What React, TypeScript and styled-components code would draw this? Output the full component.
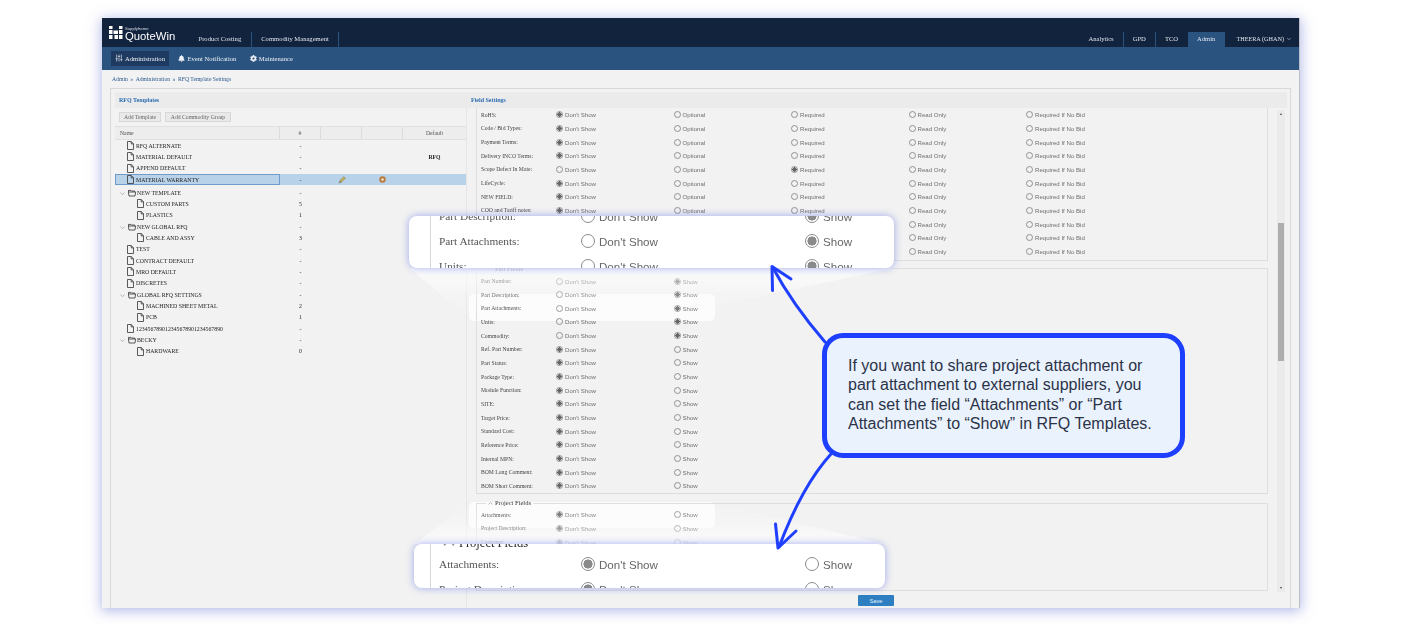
import React from 'react'
import styled, { createGlobalStyle } from 'styled-components'
import { FaBell, FaCog } from 'react-icons/fa'
import { SlidersVertical, ChevronDown } from 'lucide-react'

const GlobalStyle = createGlobalStyle`
  html, body { margin: 0; padding: 0; background: #fff; }
  body { font-family: "Liberation Serif", serif; }
  * { box-sizing: border-box; }
`

const Page = styled.div`
  width: 1402px;
  height: 625px;
  padding: 18px 102px 17px;
  overflow: hidden;
`

const Frame = styled.div`
  position: relative;
  isolation: isolate;
  width: 1198px;
  height: 590px;
  background: #f2f2f2;
  border-right: 1px solid #bcbfca;
  box-shadow: 0 2px 12px 1px rgba(104, 118, 208, 0.5);
`

const Content = styled.div`
  position: relative;
  z-index: 1;
  height: 100%;
  display: flex;
  flex-direction: column;
  filter: blur(0.35px);
`

const TopBar = styled.header`
  height: 29px;
  flex: none;
  display: flex;
  align-items: flex-end;
  background: #12233d;
  padding-left: 7px;
`

const Logo = styled.div`
  align-self: flex-start;
  display: flex;
  gap: 1px;
  width: 80px;
  padding-top: 8px;
  color: #fff;
  font-family: "Liberation Sans", sans-serif;
`

const LogoWords = styled.div`
  display: flex;
  flex-direction: column;
  small { font-size: 4.2px; line-height: 5px; color: #d8dee8; }
  strong { font-size: 11.3px; line-height: 11px; font-weight: 400; }
`

const TabGroup = styled.nav<{ $right?: boolean }>`
  display: flex;
  align-items: flex-end;
  height: 15px;
  margin-left: ${(p) => (p.$right ? 'auto' : '0')};
`

const Tab = styled.a<{ $active?: boolean; $plain?: boolean }>`
  height: 15px;
  padding: 0 9px 2px;
  display: flex;
  align-items: center;
  gap: 2px;
  font-size: 6.6px;
  color: #dfe5ee;
  background: ${(p) => (p.$active ? '#2b5380' : 'transparent')};
  border-right: 1px solid ${(p) => (p.$active || p.$plain ? 'transparent' : '#2b5380')};
`

const LeftTab = styled(Tab)`
  padding: 0 9.5px 2px;
`

const UserTab = styled(Tab)`
  padding: 0 7px 2px 11px;
  margin-right: -1px;
  font-size: 6.2px;
`

const SubBar = styled.nav`
  height: 23px;
  flex: none;
  display: flex;
  align-items: center;
  gap: 5.5px;
  background: #2b5380;
  padding-left: 9px;
`

const SubItem = styled.a<{ $active?: boolean }>`
  height: 15px;
  display: flex;
  align-items: center;
  gap: 2px;
  padding: 0 4px 1px;
  font-size: 6.6px;
  color: #eef2f7;
  background: ${(p) => (p.$active ? '#1e3a60' : 'transparent')};
  svg { flex: none; }
`

const Breadcrumb = styled.div`
  height: 18px;
  flex: none;
  padding-left: 10px;
  display: flex;
  align-items: center;
  gap: 2.5px;
  font-size: 5.7px;
  color: #2b5a8f;
`

const Panel = styled.section`
  flex: 1;
  min-height: 0;
  margin: 0 8px 0 8px;
  padding: 3px 3px 0 4px;
  border: 1px solid #d8d8d8;
  border-bottom: 0;
  display: flex;
  flex-direction: column;
`

const PanelHead = styled.div`
  height: 16px;
  flex: none;
  display: grid;
  grid-template-columns: 352px 1fr;
  align-items: center;
  padding-left: 4px;
  background: #ebebeb;
  font-size: 6px;
  font-weight: 700;
  color: #2b6cb0;
`

const PanelBody = styled.div`
  flex: 1;
  min-height: 0;
  display: grid;
  grid-template-columns: 351px 1fr;
`

const TemplateCol = styled.div`
  display: flex;
  flex-direction: column;
`

const Toolbar = styled.div`
  height: 18px;
  display: flex;
  align-items: center;
  gap: 4px;
  padding-left: 4px;
`

const ToolButton = styled.button<{ $w: number }>`
  width: ${(p) => p.$w}px;
  height: 10px;
  padding: 0;
  border: 1px solid #d8d8d8;
  background: #e9e9e9;
  color: #666;
  font: 5.7px "Liberation Serif", serif;
`

const HeadRow = styled.div`
  height: 14px;
  display: grid;
  grid-template-columns: 165px 41px 41px 41px 1fr;
  background: #ededed;
  border-top: 1px solid #e0e0e0;
  border-bottom: 1px solid #e0e0e0;
`

const HeadCell = styled.div<{ $left?: boolean }>`
  display: flex;
  align-items: center;
  justify-content: ${(p) => (p.$left ? 'flex-start' : 'center')};
  padding-left: ${(p) => (p.$left ? '5px' : '0')};
  border-right: 1px solid #dcdcdc;
  font-size: 5.7px;
  color: #555;
  &:last-child { border-right: 0; }
`

const TreeRow = styled.div<{ $selected?: boolean; $tall?: boolean }>`
  height: 11.33px;
  margin-top: ${(p) => (p.$tall ? '1.7px' : '0')};
  display: grid;
  grid-template-columns: 165px 41px 41px 41px 1fr;
  align-items: center;
  font-size: 5.8px;
  color: #1c1c1c;
  background: ${(p) => (p.$selected ? '#b8d2e9' : 'transparent')};
`

const NameCell = styled.div<{ $level: number; $selected?: boolean; $folder?: boolean }>`
  height: 100%;
  display: flex;
  align-items: center;
  gap: ${(p) => (p.$folder ? '1px' : '2px')};
  white-space: nowrap;
  padding-left: ${(p) => 12 + p.$level * 10}px;
  outline: ${(p) => (p.$selected ? '1px solid #6f9ccb' : 'none')};
  outline-offset: -1px;
`

const Twist = styled.span`
  position: relative;
  width: 0;
  height: 0;
  svg { position: absolute; left: -7px; top: -2px; }
`

const CountCell = styled.div`
  text-align: center;
`

const DefaultCell = styled.div`
  grid-column: 5;
  text-align: center;
  font-weight: 700;
  font-size: 5.7px;
`

const IconCell = styled.div`
  display: flex;
  justify-content: center;
`

const FieldCol = styled.div`
  min-height: 0;
  display: flex;
  flex-direction: column;
  border-left: 1px solid #e6e6e6;
`

const Pane = styled.div`
  height: 484px;
  flex: none;
  display: flex;
  padding-left: 9px;
  overflow: hidden;
`

const Fields = styled.div`
  width: 792px;
  flex: none;
`

const OpenGroup = styled.div`
  height: 153px;
  padding-left: 4px;
  border: 1px solid #dedede;
  border-top: 0;
`

const Group = styled.fieldset<{ $gap: number; $pad: number }>`
  margin: ${(p) => p.$gap}px 0 0;
  padding: ${(p) => p.$pad}px 0 0 4px;
  min-width: 0;
  border: 1px solid #dedede;
`

const GroupLegend = styled.legend`
  margin-left: 5px;
  padding: 0 2px;
  height: 8px;
  display: flex;
  align-items: center;
  gap: 2px;
  font-size: 6.5px;
  line-height: 8px;
  color: #333;
`

const FieldRow = styled.div<{ $cols: number }>`
  height: 13.67px;
  display: grid;
  grid-template-columns: 75px repeat(${(p) => p.$cols}, 117.5px);
  align-items: center;
`

const FieldLabel = styled.span`
  font-size: 5.67px;
  color: #444;
  white-space: nowrap;
`

const Choice = styled.label`
  display: flex;
  align-items: center;
  gap: 2px;
  font: 6.1px "Liberation Sans", sans-serif;
  color: #6f6f6f;
  white-space: nowrap;
`

const Radio = styled.span<{ $on?: boolean }>`
  width: 7px;
  height: 7px;
  flex: none;
  border-radius: 50%;
  border: 0.7px solid #8f8f8f;
  background: ${(p) =>
    p.$on ? 'radial-gradient(circle, #666 0 2px, transparent 2.3px)' : 'transparent'};
`

const Scrollbar = styled.div`
  position: relative;
  width: 8px;
  height: 482px;
  margin: 2px 0 0 9px;
  flex: none;
  background: #ebebeb;
  &::before, &::after {
    content: '';
    position: absolute;
    left: 2.5px;
    border-left: 1.5px solid transparent;
    border-right: 1.5px solid transparent;
  }
  &::before { top: 3px; border-bottom: 2px solid #444; }
  &::after { bottom: 3px; border-top: 2px solid #444; }
`

const Thumb = styled.div`
  position: absolute;
  top: 113px;
  left: 1px;
  width: 6px;
  height: 138px;
  background: #aeaeae;
`

const SaveRow = styled.div`
  flex: none;
  display: flex;
  justify-content: flex-start;
  padding: 3px 0 0 391px;
`

const SaveButton = styled.button`
  width: 36px;
  height: 11px;
  padding: 0;
  border: 0;
  border-radius: 1px;
  background: #2d7fc1;
  color: #e6f1fa;
  font: 5.7px "Liberation Sans", sans-serif;
`

const Spot = styled.div`
  position: absolute;
  z-index: 0;
  left: 367px;
  width: 246px;
  border-radius: 5px;
  background: #fcfcfc;
`

const PartSpot = styled(Spot)`
  top: 276px;
  height: 27px;
`

const ProjectSpot = styled(Spot)`
  top: 484px;
  height: 26px;
`

const Overlay = styled.svg`
  position: absolute;
  z-index: 2;
  left: 0;
  top: 0;
  width: 1198px;
  height: 590px;
  pointer-events: none;
`

const ZoomCard = styled.div`
  position: absolute;
  z-index: 2;
  overflow: hidden;
  background: #fff;
  border-radius: 8px;
  box-shadow: 0 0 7px 1px rgba(92, 108, 226, 0.45);
  &::before {
    content: '';
    position: absolute;
    top: 0;
    bottom: 0;
    width: 1px;
    background: #d8d8d8;
  }
`

const PartCard = styled(ZoomCard)`
  left: 307px;
  top: 198px;
  width: 485px;
  height: 52px;
  padding: 0 0 0 30px;
  &::before { left: 21px; }
`

const ProjectCard = styled(ZoomCard)`
  left: 312px;
  top: 526px;
  width: 471px;
  height: 44px;
  padding-left: 25px;
  &::before { left: 16px; }
`

const ZoomRows = styled.div<{ $shift: number }>`
  margin-top: ${(p) => p.$shift}px;
  filter: blur(0.25px);
`

const ZoomRow = styled.div`
  height: 25px;
  display: grid;
  grid-template-columns: 142px 224px 1fr;
  align-items: center;
`

const ZoomLabel = styled.span`
  font-size: 11.3px;
  color: #555;
  white-space: nowrap;
`

const ZoomChoice = styled.span`
  display: flex;
  align-items: center;
  gap: 4px;
  font: 11.6px "Liberation Sans", sans-serif;
  color: #666;
`

const ZoomRadio = styled.span<{ $on?: boolean }>`
  width: 14px;
  height: 14px;
  flex: none;
  border-radius: 50%;
  border: 1.2px solid #8a8a8a;
  background: ${(p) =>
    p.$on ? 'radial-gradient(circle, #8a8a8a 0 4.3px, transparent 4.8px)' : '#fff'};
`

const ZoomLegend = styled.div`
  height: 16.5px;
  margin-left: 4px;
  display: flex;
  align-items: flex-start;
  gap: 4px;
  font-size: 12.5px;
  line-height: 16px;
  color: #262626;
  svg { margin-top: 2px; }
`

const Callout = styled.aside`
  position: absolute;
  z-index: 3;
  left: 720px;
  top: 315px;
  width: 363px;
  height: 125px;
  display: flex;
  align-items: center;
  padding: 0 21px 2px;
  background: #eaf2fd;
  border: 5px solid #1f3fff;
  border-radius: 21px;
  font: 16px/19.2px "Liberation Sans", sans-serif;
  color: #2a3348;
`

const FileIcon = () => (
  <svg width="7" height="9" viewBox="0 0 7 9" fill="none" stroke="#333" strokeWidth="0.8">
    <path d="M.5.5h3.8L6.5 2.8v5.7h-6z" />
    <path d="M4.2.6v2.3h2.2" />
  </svg>
)

const FolderIcon = () => (
  <svg width="8" height="8" viewBox="0 0 8 8" fill="none" stroke="#333" strokeWidth="0.8">
    <path d="M.5 3V1.4h2.4l.6.6h3.2V3" />
    <path d="M.4 3h7.2l-.6 4H1z" />
  </svg>
)

const Chevron = ({ size = 5, color = '#9a9a9a', up = false }) => (
  <svg width={size} height={size} viewBox="0 0 6 6" fill="none" stroke={color} strokeWidth="0.8">
    <path d={up ? 'M.5 4.2L3 1.6l2.5 2.6' : 'M.5 1.8L3 4.4l2.5-2.6'} />
  </svg>
)

const PencilIcon = () => (
  <svg width="8" height="8" viewBox="0 0 8 8">
    <path d="M1 7l1-2.6L5.8.8l1.6 1.5L3.6 6z" fill="#c9b35a" stroke="#7b7047" strokeWidth="0.5" />
    <path d="M1 7l1-2.6L3.6 6z" fill="#8a8a7a" />
  </svg>
)

const DeleteIcon = () => (
  <svg width="7" height="7" viewBox="0 0 7 7">
    <circle cx="3.5" cy="3.5" r="3.2" fill="#b9793a" />
    <circle cx="3.5" cy="3.5" r="1.3" fill="#efe3d0" />
  </svg>
)

const LogoMark = () => (
  <svg width="15" height="14" viewBox="0 0 15 14" fill="#fff">
    <rect x="0" y="0" width="3.5" height="3" />
    <rect x="0" y="4" width="3.5" height="4" />
    <rect x="0" y="9" width="3.5" height="4" />
    <rect x="4.5" y="4.5" width="4.5" height="3.5" />
    <rect x="5.5" y="9" width="3.5" height="4" />
    <rect x="10" y="0" width="3.5" height="3" />
    <rect x="10" y="4" width="3.5" height="4" />
    <rect x="10" y="9" width="3.5" height="4" />
  </svg>
)

type TreeItem = {
  name: string
  count: string
  level?: number
  folder?: boolean
  selected?: boolean
  def?: string
  tall?: boolean
}

const tree: TreeItem[] = [
  { name: 'RFQ ALTERNATE', count: '-' },
  { name: 'MATERIAL DEFAULT', count: '-', def: 'RFQ' },
  { name: 'APPEND DEFAULT', count: '-' },
  { name: 'MATERIAL WARRANTY', count: '-', selected: true },
  { name: 'NEW TEMPLATE', count: '-', folder: true, tall: true },
  { name: 'CUSTOM PARTS', count: '5', level: 1 },
  { name: 'PLASTICS', count: '1', level: 1 },
  { name: 'NEW GLOBAL RFQ', count: '-', folder: true },
  { name: 'CABLE AND ASSY', count: '3', level: 1 },
  { name: 'TEST', count: '-' },
  { name: 'CONTRACT DEFAULT', count: '-' },
  { name: 'MRO DEFAULT', count: '-' },
  { name: 'DISCRETES', count: '-' },
  { name: 'GLOBAL RFQ SETTINGS', count: '-', folder: true },
  { name: 'MACHINED SHEET METAL', count: '2', level: 1 },
  { name: 'PCB', count: '1', level: 1 },
  { name: '123456789012345678901234567890', count: '-' },
  { name: 'BECKY', count: '-', folder: true },
  { name: 'HARDWARE', count: '0', level: 1 },
]

const settingCols = ["Don't Show", 'Optional', 'Required', 'Read Only', 'Required If No Bid']

const settings: [string, number][] = [
  ['RoHS:', 0],
  ['Code / Bid Types:', 0],
  ['Payment Terms:', 0],
  ['Delivery INCO Terms:', 0],
  ['Scope Defect In Mate:', 2],
  ['LifeCycle:', 0],
  ['NEW FIELD:', 0],
  ['COO and Tariff notes:', 0],
  ['', 0],
  ['', 0],
  ['', 0],
]

const partFields: [string, boolean][] = [
  ['Part Number:', true],
  ['Part Description:', true],
  ['Part Attachments:', true],
  ['Units:', true],
  ['Commodity:', true],
  ['Ref. Part Number:', false],
  ['Part Status:', false],
  ['Package Type:', false],
  ['Module Function:', false],
  ['SITE:', false],
  ['Target Price:', false],
  ['Standard Cost:', false],
  ['Reference Price:', false],
  ['Internal MPN:', false],
  ['BOM Long Comment:', false],
  ['BOM Short Comment:', false],
]

const projectFields = ['Attachments:', 'Project Description:', 'Customer:']

const ShowRow = ({ label, show }: { label: string; show: boolean }) => (
  <FieldRow $cols={2}>
    <FieldLabel>{label}</FieldLabel>
    <Choice>
      <Radio $on={!show} />
      Don't Show
    </Choice>
    <Choice>
      <Radio $on={show} />
      Show
    </Choice>
  </FieldRow>
)

const ZoomShowRow = ({ label, show }: { label: string; show: boolean }) => (
  <ZoomRow>
    <ZoomLabel>{label}</ZoomLabel>
    <ZoomChoice>
      <ZoomRadio $on={!show} />
      Don't Show
    </ZoomChoice>
    <ZoomChoice>
      <ZoomRadio $on={show} />
      Show
    </ZoomChoice>
  </ZoomRow>
)

const App = () => (
  <Page>
    <GlobalStyle />
    <Frame>
      <PartSpot />
      <ProjectSpot />
      <Content>
        <TopBar>
          <Logo>
            <LogoMark />
            <LogoWords>
              <small>Supplyframe</small>
              <strong>QuoteWin</strong>
            </LogoWords>
          </Logo>
          <TabGroup>
            <LeftTab>Product Costing</LeftTab>
            <LeftTab>Commodity Management</LeftTab>
          </TabGroup>
          <TabGroup $right>
            <Tab>Analytics</Tab>
            <Tab>GPD</Tab>
            <Tab $plain>TCO</Tab>
            <Tab $active>Admin</Tab>
            <UserTab $plain>
              THEERA (GHAN)
              <ChevronDown size={6} />
            </UserTab>
          </TabGroup>
        </TopBar>
        <SubBar>
          <SubItem $active>
            <SlidersVertical size={8} />
            Administration
          </SubItem>
          <SubItem>
            <FaBell size={7} />
            Event Notification
          </SubItem>
          <SubItem>
            <FaCog size={7} />
            Maintenance
          </SubItem>
        </SubBar>
        <Breadcrumb>
          <span>Admin</span>
          <span>»</span>
          <span>Administration</span>
          <span>»</span>
          <span>RFQ Template Settings</span>
        </Breadcrumb>
        <Panel>
          <PanelHead>
            <span>RFQ Templates</span>
            <span>Field Settings</span>
          </PanelHead>
          <PanelBody>
            <TemplateCol>
              <Toolbar>
                <ToolButton $w={42}>Add Template</ToolButton>
                <ToolButton $w={66}>Add Commodity Group</ToolButton>
              </Toolbar>
              <HeadRow>
                <HeadCell $left>Name</HeadCell>
                <HeadCell>#</HeadCell>
                <HeadCell />
                <HeadCell />
                <HeadCell>Default</HeadCell>
              </HeadRow>
              {tree.map((item) => (
                <TreeRow key={item.name} $selected={item.selected} $tall={item.tall}>
                  <NameCell $level={item.level ?? 0} $selected={item.selected} $folder={item.folder}>
                    {item.folder && (
                      <Twist>
                        <Chevron />
                      </Twist>
                    )}
                    {item.folder ? <FolderIcon /> : <FileIcon />}
                    {item.name}
                  </NameCell>
                  <CountCell>{item.count}</CountCell>
                  {item.selected && (
                    <>
                      <IconCell>
                        <PencilIcon />
                      </IconCell>
                      <IconCell>
                        <DeleteIcon />
                      </IconCell>
                    </>
                  )}
                  {item.def && <DefaultCell>{item.def}</DefaultCell>}
                </TreeRow>
              ))}
            </TemplateCol>
            <FieldCol>
              <Pane>
                <Fields>
                  <OpenGroup>
                    {settings.map(([label, on], i) => (
                      <FieldRow $cols={5} key={i}>
                        <FieldLabel>{label}</FieldLabel>
                        {settingCols.map((col, c) => (
                          <Choice key={col}>
                            <Radio $on={c === on} />
                            {col}
                          </Choice>
                        ))}
                      </FieldRow>
                    ))}
                  </OpenGroup>
                  <Group $gap={3.5} $pad={1.7}>
                    <GroupLegend>
                      <Chevron up />
                      Part Fields
                    </GroupLegend>
                    {partFields.map(([label, show]) => (
                      <ShowRow key={label} label={label} show={show} />
                    ))}
                  </Group>
                  <Group $gap={5.5} $pad={0.7}>
                    <GroupLegend>
                      <Chevron up />
                      Project Fields
                    </GroupLegend>
                    {projectFields.map((label) => (
                      <ShowRow key={label} label={label} show={false} />
                    ))}
                    <FieldRow $cols={2} />
                    <FieldRow $cols={2} />
                    <FieldRow $cols={2} />
                  </Group>
                </Fields>
                <Scrollbar>
                  <Thumb />
                </Scrollbar>
              </Pane>
              <SaveRow>
                <SaveButton>Save</SaveButton>
              </SaveRow>
            </FieldCol>
          </PanelBody>
        </Panel>
      </Content>

      <Overlay viewBox="102 18 1198 590">
        <defs>
          <linearGradient id="fanTop" x1="0" y1="0" x2="0" y2="1">
            <stop offset="0" stopColor="#fff" stopOpacity="0.75" />
            <stop offset="0.5" stopColor="#fff" stopOpacity="0.25" />
            <stop offset="1" stopColor="#fff" stopOpacity="0" />
          </linearGradient>
          <linearGradient id="fanBottom" x1="0" y1="1" x2="0" y2="0">
            <stop offset="0" stopColor="#fff" stopOpacity="0.75" />
            <stop offset="0.45" stopColor="#fff" stopOpacity="0.3" />
            <stop offset="1" stopColor="#fff" stopOpacity="0" />
          </linearGradient>
        </defs>
        <path d="M409 268H894L715 306V321H469V317Z" fill="url(#fanTop)" />
        <path d="M469 503H715L885 544H414Z" fill="url(#fanBottom)" />
      </Overlay>

      <PartCard>
        <ZoomRows $shift={-12.5}>
          <ZoomShowRow label="Part Description:" show />
          <ZoomShowRow label="Part Attachments:" show />
          <ZoomShowRow label="Units:" show />
        </ZoomRows>
      </PartCard>
      <ProjectCard>
        <ZoomRows $shift={-9}>
          <ZoomLegend>
            <Chevron size={12} color="#999" up />
            Project Fields
          </ZoomLegend>
          <ZoomShowRow label="Attachments:" show={false} />
          <ZoomShowRow label="Project Description:" show={false} />
        </ZoomRows>
      </ProjectCard>

      <Overlay viewBox="102 18 1198 590">
        <g fill="none" stroke="#1f3fff" strokeWidth="3" strokeLinecap="round" strokeLinejoin="round">
          <path d="M825 342C806 320 788 296 772.5 267" />
          <path d="M772.5 290.5L772 266.5L791 279" />
          <path d="M831 454C810 477 793 510 779 547" />
          <path d="M775.5 524L778 548L796 531" />
        </g>
      </Overlay>

      <Callout>
        If you want to share project attachment or part attachment to external suppliers, you can
        set the field “Attachments” or “Part Attachments” to “Show” in RFQ Templates.
      </Callout>
    </Frame>
  </Page>
)

export default App
